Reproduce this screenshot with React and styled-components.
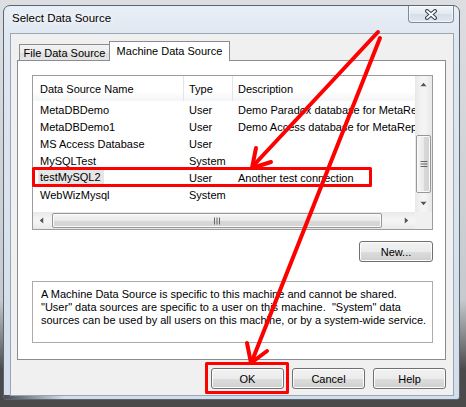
import React from 'react'
import styled, { createGlobalStyle } from 'styled-components'

const GlobalStyle = createGlobalStyle`
  html, body {
    margin: 0;
    padding: 0;
  }
  body {
    width: 466px;
    height: 407px;
    overflow: hidden;
    font-family: "Liberation Sans", Arial, sans-serif;
    font-size: 11px;
    color: #000;
  }
  * {
    box-sizing: border-box;
  }
`

const Screen = styled.div`
  position: relative;
  width: 466px;
  height: 407px;
  padding: 5px 6px 7px 3px;
  background: linear-gradient(to bottom, #dcdee1 0, #c6c9cd 300px, #4a4a4a 370px);
`

const Window = styled.div`
  display: flex;
  flex-direction: column;
  height: 100%;
  border: 1px solid #5b6674;
  border-radius: 7px 7px 3px 3px;
  padding: 0 5px 3px 6px;
  background:
    linear-gradient(to right, rgba(50, 50, 50, 0.85) 0, rgba(50, 50, 50, 0) 60px) bottom / 100% 4px no-repeat,
    linear-gradient(to bottom, #e9eff6 0, #dfe7f1 30px, #d3deea 100%);
`

const TitleBar = styled.div`
  display: flex;
  justify-content: space-between;
  height: 27px;
  flex-shrink: 0;
`

const Title = styled.div`
  align-self: center;
  padding: 0 0 3px 2px;
  font-size: 11.5px;
  color: #000;
  text-shadow: 0 0 6px #fff, 0 0 8px #fff;
`

const CloseButton = styled.div`
  display: flex;
  align-items: center;
  justify-content: center;
  width: 46px;
  height: 17px;
  border: 1px solid #7f8a98;
  border-top: none;
  border-radius: 0 0 4px 4px;
  background: linear-gradient(to bottom, #f3f6fa 0, #e2e9f1 50%, #d5dee9 51%, #e0e8f1 100%);
  box-shadow: inset 0 0 0 1px rgba(255, 255, 255, 0.6);
`

const Client = styled.div`
  flex: 1;
  display: flex;
  flex-direction: column;
  border: 1px solid #9aa6b4;
  background: #f0f0f0;
  padding: 7px 7px 0 6px;
`

const TabStrip = styled.div`
  display: flex;
  align-items: flex-end;
  height: 20px;
  padding-left: 2px;
  margin-bottom: -1px;
  position: relative;
  z-index: 1;
`

const Tab = styled.div`
  display: flex;
  align-items: center;
  justify-content: center;
  width: ${p => p.$w}px;
  height: ${p => (p.$active ? 20 : 17)}px;
  margin-left: ${p => (p.$active ? -1 : 0)}px;
  padding-bottom: ${p => (p.$active ? 2 : 0)}px;
  border: 1px solid #898c95;
  border-bottom: ${p => (p.$active ? 'none' : '1px solid #898c95')};
  background: ${p => (p.$active ? '#fff' : 'linear-gradient(to bottom, #f3f3f3 0, #ebebeb 50%, #dedede 51%, #e5e5e5 100%)')};
  font-size: 11px;
  white-space: nowrap;
`

const Panel = styled.div`
  display: flex;
  flex-direction: column;
  height: 300px;
  border: 1px solid #898c95;
  background: #fff;
  padding: 14px 12px 0 14px;
`

const ListView = styled.div`
  display: grid;
  grid-template-columns: 1fr 17px;
  grid-template-rows: 1fr 17px;
  height: 155px;
  border: 1px solid #9c9c9c;
  background: #fff;
`

const ListBody = styled.div`
  overflow: hidden;
`

const Row = styled.div`
  display: grid;
  grid-template-columns: 151px 49px 1fr;
  height: ${p => (p.$header ? 25 : 17)}px;
  background: ${p => (p.$header ? 'linear-gradient(to bottom, #ffffff 0, #ffffff 60%, #f4f5f7 100%)' : 'transparent')};
`

const Cell = styled.div`
  display: flex;
  align-items: center;
  padding-left: 5px;
  white-space: nowrap;
  overflow: hidden;
  border-right: ${p => (p.$header ? '1px solid #e3e5e8' : 'none')};

  &:first-child {
    padding-left: 7px;
  }
  &:last-child {
    border-right: none;
  }
`

const Selected = styled.span`
  display: inline-block;
  height: 17px;
  line-height: 17px;
  margin-left: -2px;
  padding: 0 3px 0 2px;
  background: #e6e6e6;
`

const VScroll = styled.div`
  display: flex;
  flex-direction: column;
  background: linear-gradient(to right, #e8e8e8 0, #f4f4f4 40%, #f4f4f4 60%, #e8e8e8 100%);
`

const HScroll = styled.div`
  display: flex;
  align-items: center;
  background: linear-gradient(to bottom, #e8e8e8 0, #f4f4f4 40%, #f4f4f4 60%, #e8e8e8 100%);
`

const ArrowBox = styled.div`
  display: flex;
  align-items: center;
  justify-content: center;
  width: 17px;
  height: 17px;
  flex-shrink: 0;
`

const VTrack = styled.div`
  flex: 1;
  padding: 42px 1px 0 1px;
`

const VThumb = styled.div`
  display: flex;
  align-items: center;
  justify-content: center;
  height: 58px;
  border: 1px solid #979797;
  border-radius: 2px;
  background: linear-gradient(to right, #f5f5f5 0, #e9e9e9 50%, #d9d9d9 51%, #d3d3d3 100%);
  box-shadow: inset 0 0 0 1px #fafafa;
`

const HTrack = styled.div`
  flex: 1;
  display: flex;
  align-items: center;
  padding: 0 16px 0 2px;
`

const HThumb = styled.div`
  display: flex;
  align-items: center;
  justify-content: center;
  flex: 1;
  height: 15px;
  border: 1px solid #979797;
  border-radius: 2px;
  background: linear-gradient(to bottom, #f5f5f5 0, #e9e9e9 50%, #d9d9d9 51%, #d3d3d3 100%);
  box-shadow: inset 0 0 0 1px #fafafa;
`

const Corner = styled.div`
  background: #f0f0f0;
`

const ButtonRow = styled.div`
  display: flex;
  justify-content: flex-end;
  gap: 8px;
  margin-top: ${p => p.$top}px;
`

const Button = styled.div`
  display: flex;
  align-items: center;
  justify-content: center;
  width: ${p => p.$w || 73}px;
  height: 21px;
  border: 1px solid #707070;
  border-radius: 3px;
  background: linear-gradient(to bottom, #f2f2f2 0, #ebebeb 50%, #dddddd 51%, #cfcfcf 100%);
  box-shadow: inset 0 0 0 1px #fcfcfc;
  font-size: 11px;
`

const InfoBox = styled.div`
  height: 62px;
  margin-top: 19px;
  border: 1px solid #ababab;
  padding: 6px 0 0 8px;
  line-height: 13px;
  white-space: pre;
`

const Overlay = styled.svg`
  position: absolute;
  left: 0;
  top: 0;
  pointer-events: none;
`

const Grip = ({ vertical }) => (
  <svg width="8" height="8" viewBox="0 0 8 8">
    {[1.5, 4, 6.5].map(v =>
      vertical
        ? <line key={v} x1="0.5" x2="7.5" y1={v} y2={v} stroke="#666" strokeWidth="1" />
        : <line key={v} y1="0.5" y2="7.5" x1={v} x2={v} stroke="#666" strokeWidth="1" />
    )}
  </svg>
)

const Arrow = ({ dir }) => {
  const pts = {
    up: '0.5,4 3.5,0.5 6.5,4',
    down: '0.5,0.5 3.5,4 6.5,0.5',
    left: '4,0.5 0.5,3.5 4,6.5',
    right: '0.5,0.5 4,3.5 0.5,6.5',
  }[dir]
  const horiz = dir === 'left' || dir === 'right'
  return (
    <svg width={horiz ? 5 : 7} height={horiz ? 7 : 5} viewBox={horiz ? '0 0 4.5 7' : '0 0 7 4.5'}>
      <polygon points={pts} fill="#555" />
    </svg>
  )
}

const sources = [
  ['MetaDBDemo', 'User', 'Demo Paradox database for MetaRe...'],
  ['MetaDBDemo1', 'User', 'Demo Access database for MetaReports'],
  ['MS Access Database', 'User', ''],
  ['MySQLTest', 'System', ''],
  ['testMySQL2', 'User', 'Another test connection', true],
  ['WebWizMysql', 'System', ''],
]

const info = 'A Machine Data Source is specific to this machine and cannot be shared.\n"User" data sources are specific to a user on this machine.  "System" data\nsources can be used by all users on this machine, or by a system-wide service.'

const App = () => {
  return (
    <>
      <GlobalStyle />
      <Screen>
        <Window>
          <TitleBar>
            <Title>Select Data Source</Title>
            <CloseButton>
              <svg width="14" height="11" viewBox="0 0 14 11">
                <path d="M3 2 L11 9 M11 2 L3 9" stroke="#3b4350" strokeWidth="4" strokeLinecap="round" />
                <path d="M3 2 L11 9 M11 2 L3 9" stroke="#fff" strokeWidth="1.8" strokeLinecap="round" />
              </svg>
            </CloseButton>
          </TitleBar>

          <Client>
            <TabStrip>
              <Tab $w={91}>File Data Source</Tab>
              <Tab $w={121} $active>Machine Data Source</Tab>
            </TabStrip>

            <Panel>
              <ListView>
                <ListBody>
                  <Row $header>
                    <Cell $header>Data Source Name</Cell>
                    <Cell $header>Type</Cell>
                    <Cell $header>Description</Cell>
                  </Row>
                  {sources.map(([name, type, desc, sel]) => (
                    <Row key={name}>
                      <Cell>{sel ? <Selected>{name}</Selected> : name}</Cell>
                      <Cell>{type}</Cell>
                      <Cell>{desc}</Cell>
                    </Row>
                  ))}
                </ListBody>
                <VScroll>
                  <ArrowBox><Arrow dir="up" /></ArrowBox>
                  <VTrack>
                    <VThumb><Grip vertical /></VThumb>
                  </VTrack>
                  <ArrowBox><Arrow dir="down" /></ArrowBox>
                </VScroll>
                <HScroll>
                  <ArrowBox><Arrow dir="left" /></ArrowBox>
                  <HTrack>
                    <HThumb><Grip /></HThumb>
                  </HTrack>
                  <ArrowBox><Arrow dir="right" /></ArrowBox>
                </HScroll>
                <Corner />
              </ListView>

              <ButtonRow $top={11}>
                <Button $w={74}>New...</Button>
              </ButtonRow>

              <InfoBox>{info}</InfoBox>
            </Panel>

            <ButtonRow $top={8}>
              <Button>OK</Button>
              <Button>Cancel</Button>
              <Button>Help</Button>
            </ButtonRow>
          </Client>
        </Window>

        {/* red annotations drawn over the dialog */}
        <Overlay width="466" height="407" viewBox="0 0 466 407">
          <g fill="none" stroke="#ff0000" strokeLinecap="round" strokeLinejoin="round">
            <rect x="33.5" y="168.5" width="337" height="17" strokeWidth="3" strokeLinecap="butt" />
            <rect x="206.5" y="363.5" width="81" height="29" strokeWidth="3" strokeLinecap="butt" />
            <line x1="378" y1="32" x2="253" y2="166" strokeWidth="4" />
            <polyline points="271,162 252,168 256,148" strokeWidth="4" />
            <line x1="380" y1="38" x2="252" y2="361" strokeWidth="4" />
            <polyline points="267,351 251,363 247,343" strokeWidth="4" />
          </g>
        </Overlay>
      </Screen>
    </>
  )
}

export default App
